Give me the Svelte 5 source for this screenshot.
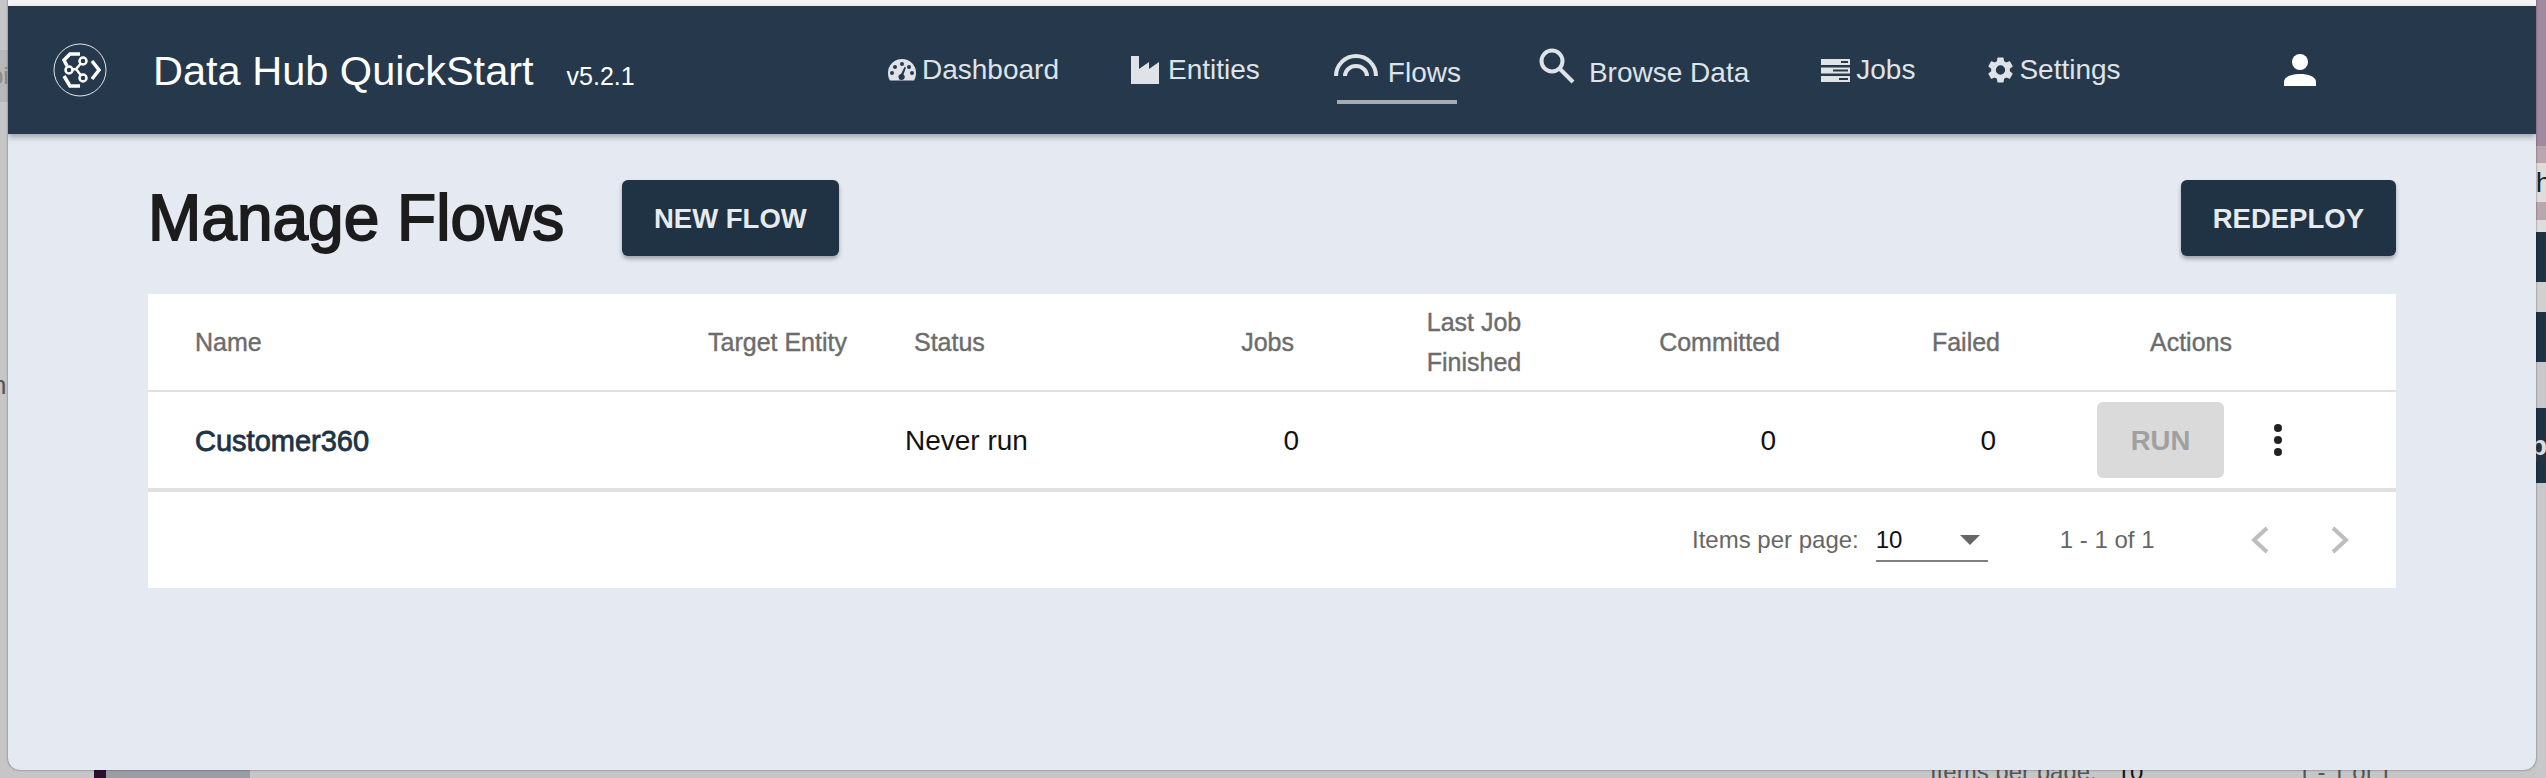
<script lang="ts">
	const navItems = [
		{ id: 'dashboard', label: 'Dashboard', active: false },
		{ id: 'entities', label: 'Entities', active: false },
		{ id: 'flows', label: 'Flows', active: true },
		{ id: 'browse', label: 'Browse Data', active: false },
		{ id: 'jobs', label: 'Jobs', active: false },
		{ id: 'settings', label: 'Settings', active: false }
	];
</script>

<div class="desk">
	<!-- bits of other windows peeking out behind the app window -->
	<div class="left-tab"><span>pi</span></div>
	<div class="left-letter">n</div>
	<div class="side">
		<div class="s-purple"></div>
		<div class="s-mauve"></div>
		<div class="s-text">th</div>
		<div class="s-mauve short"></div>
		<div class="s-light"></div>
		<div class="s-dark"><i></i></div>
		<div class="s-grey"></div>
		<div class="s-dark low">p</div>
	</div>
	<div class="dock">
		<i class="d-plum"></i><i class="d-slate"></i>
	</div>
	<div class="behind">
		<span class="lbl">Items per page:</span><span class="val">10</span><span class="lbl rng">1 - 1 of 1</span>
	</div>

	<main class="window">
		<div class="titlebar"></div>
		<header class="topbar">
			<div class="brand">
				<svg class="logo" viewBox="0 0 54 54" width="54" height="54" fill="none" stroke="#fff">
					<circle cx="27" cy="27" r="26" stroke-width="1" stroke="#dfe3e8" />
					<path d="M27 11H17l-6 6 3 6M11 33l6 10h10" stroke-width="3.500" />
					<path d="M39 18l7 9-7 9" stroke-width="3.500" />
					<path d="M23 26l-7 1M23 26l7-8M23 26l7 9" stroke-width="2.500" />
					<circle cx="30" cy="18" r="3.500" stroke-width="2.500" fill="#26394c" />
					<circle cx="16" cy="27" r="3.500" stroke-width="2.500" fill="#26394c" />
					<circle cx="30" cy="35" r="3.500" stroke-width="2.500" fill="#26394c" />
				</svg>
				<div class="brand-text">
					<span class="app-name">Data Hub QuickStart</span>
					<span class="version">v5.2.1</span>
				</div>
			</div>
			<nav class="nav">
				{#each navItems as item}
					<a class="nav-item {item.id}" class:active={item.active} href="#{item.id}">
						{#if item.id === 'dashboard'}
							<svg viewBox="0 0 28 22" width="28" height="22" fill="#dfe3e8">
								<path fill-rule="evenodd" d="M14 0a14 14 0 0 1 14 14c0 3-.8 5.500-2 7.500H2C.8 19.500 0 17 0 14A14 14 0 0 1 14 0zM14 3a2 2 0 1 0 0 4 2 2 0 0 0 0-4zM7 6a2 2 0 1 0 0 4 2 2 0 0 0 0-4zM21 6a2 2 0 1 0 0 4 2 2 0 0 0 0-4zM4 12a2 2 0 1 0 0 4 2 2 0 0 0 0-4zM24 12a2 2 0 1 0 0 4 2 2 0 0 0 0-4zM16.500 8L13 15a3 3 0 1 0 1 6 3 3 0 0 0 1.500-5.500l2.500-7z" />
							</svg>
						{:else if item.id === 'entities'}
							<svg viewBox="0 0 28 28" width="28" height="28" fill="#dfe3e8">
								<path d="M0 0h8v13l10-7v7l10-7v22H0z" />
							</svg>
						{:else if item.id === 'flows'}
							<svg viewBox="0 0 44 22" width="44" height="22" fill="none" stroke="#dfe3e8" stroke-width="4">
								<path d="M2 22a20 20 0 0 1 40 0" />
								<path d="M11 22a11 10 0 0 1 22 0" />
							</svg>
						{:else if item.id === 'browse'}
							<svg viewBox="0 0 36 36" width="36" height="36" fill="none" stroke="#dfe3e8" stroke-width="4">
								<circle cx="13" cy="13" r="10.500" />
								<path d="M21 21l13 13" />
							</svg>
						{:else if item.id === 'jobs'}
							<svg viewBox="0 0 29 23" width="29" height="23" fill="#dfe3e8">
								<path fill-rule="evenodd" d="M0 0h29v6H0zM20 2v2h7V2zM0 8.500h29v6H0zM12 10.500v2h15v-2zM0 17h29v6H0zM18 19v2h9v-2z" />
							</svg>
						{:else if item.id === 'settings'}
							<svg viewBox="2.500 2 19 20" width="25" height="26" fill="#dfe3e8">
								<path d="M19.140 12.940c.04-.3.060-.61.060-.94s-.02-.64-.07-.94l2.030-1.580a.49.49 0 0 0 .12-.61l-1.920-3.320a.49.49 0 0 0-.59-.22l-2.390.96a7 7 0 0 0-1.620-.94l-.36-2.540a.48.48 0 0 0-.48-.41h-3.840a.48.48 0 0 0-.47.41l-.36 2.540a7.300 7.300 0 0 0-1.620.94l-2.390-.96a.49.49 0 0 0-.59.22L2.740 8.870a.48.48 0 0 0 .12.61l2.030 1.580c-.05.3-.09.63-.09.94s.02.64.07.94l-2.030 1.580a.49.49 0 0 0-.12.61l1.920 3.320c.12.22.37.29.59.22l2.390-.96c.5.380 1.030.7 1.620.94l.36 2.540c.05.240.24.410.480.410h3.840c.24 0 .44-.17.47-.41l.36-2.540a7 7 0 0 0 1.620-.94l2.390.96c.22.080.47 0 .59-.22l1.920-3.320a.48.48 0 0 0-.12-.61zM12 15.600a3.600 3.600 0 1 1 0-7.200 3.600 3.600 0 0 1 0 7.200z" />
							</svg>
						{/if}
						<span>{item.label}</span>
					</a>
				{/each}
			</nav>
			<svg class="user" viewBox="0 0 32 32" width="32" height="32" fill="#fff">
				<circle cx="16" cy="8" r="8" />
				<path d="M0 32v-4c0-5.500 8-8 16-8s16 2.500 16 8v4z" />
			</svg>
		</header>

		<div class="page">
			<div class="title-row">
				<h1>Manage Flows</h1>
				<button class="btn">NEW FLOW</button>
				<button class="btn redeploy">REDEPLOY</button>
			</div>

			<section class="card">
				<div class="grid head">
					<span class="c-name">Name</span>
					<span class="c-target">Target Entity</span>
					<span class="c-status">Status</span>
					<span class="c-jobs">Jobs</span>
					<span class="c-last">Last Job<br />Finished</span>
					<span class="c-comm">Committed</span>
					<span class="c-fail">Failed</span>
					<span class="c-act">Actions</span>
				</div>
				<div class="grid row">
					<a class="c-name flow-link" href="#customer360">Customer360</a>
					<span class="c-target"></span>
					<span class="c-status never">Never run</span>
					<span class="c-jobs">0</span>
					<span class="c-last"></span>
					<span class="c-comm">0</span>
					<span class="c-fail">0</span>
					<span class="c-act actions">
						<button class="run" disabled>RUN</button>
						<span class="dots" aria-label="More"><i></i><i></i><i></i></span>
					</span>
				</div>
				<div class="paginator">
					<span class="pg-label">Items per page:</span>
					<span class="pg-select">10<i class="caret"></i></span>
					<span class="pg-range">1 - 1 of 1</span>
					<svg class="chev" viewBox="0 0 20 28" width="20" height="28" fill="none" stroke="#bdbdbd" stroke-width="4">
						<path d="M17 2L4 14l13 12" />
					</svg>
					<svg class="chev next" viewBox="0 0 20 28" width="20" height="28" fill="none" stroke="#bdbdbd" stroke-width="4">
						<path d="M3 2l13 12L3 26" />
					</svg>
				</div>
			</section>
		</div>
	</main>
</div>

<style>
	:global(body) {
		margin: 0;
		font-family: 'Liberation Sans', Arial, sans-serif;
	}
	.desk {
		position: relative;
		width: 2546px;
		height: 778px;
		overflow: hidden;
		background: #c6c6c6;
	}
	.left-tab {
		position: absolute;
		left: 0;
		top: 50px;
		width: 8px;
		height: 52px;
		overflow: hidden;
		background: #b8b8b8;
		color: #8a8a8a;
		font-size: 24px;
		line-height: 52px;
	}
	.left-tab span {
		margin-left: -10px;
	}
	.left-letter {
		position: absolute;
		left: -8px;
		top: 370px;
		font-size: 26px;
		color: #555;
	}
	.side {
		position: absolute;
		left: 2536px;
		top: 0;
		width: 10px;
		height: 778px;
		overflow: hidden;
		display: flex;
		flex-direction: column;
		background: #c8c8cc;
	}
	.s-purple {
		height: 146px;
		background: #a08a9f;
	}
	.s-mauve {
		height: 17px;
		background: #b9a6ae;
	}
	.s-mauve.short {
		height: 18px;
	}
	.s-text {
		height: 39px;
		background: #e0dcdc;
		color: #222;
		font-size: 28px;
		line-height: 39px;
		white-space: nowrap;
		text-indent: -8px;
	}
	.s-light {
		height: 12px;
		background: #ddd;
	}
	.s-dark {
		position: relative;
		height: 130px;
		background: #203344;
	}
	.s-dark i {
		position: absolute;
		left: 0;
		top: 50px;
		width: 10px;
		height: 30px;
		background: #d0d0d0;
	}
	.s-dark.low {
		height: 75px;
		color: #ddd;
		font-size: 28px;
		font-weight: 700;
		line-height: 75px;
		text-indent: -6px;
	}
	.s-grey {
		height: 46px;
		background: #c8c8cc;
	}
	.dock {
		position: absolute;
		left: 94px;
		top: 770px;
		display: flex;
	}
	.dock i {
		display: block;
		height: 8px;
	}
	.d-plum {
		width: 12px;
		background: #2a0f2e;
	}
	.d-slate {
		width: 144px;
		background: #9a9ea3;
	}
	.behind {
		position: absolute;
		left: 1930px;
		top: 758px;
		font-size: 24px;
		color: #555;
		white-space: nowrap;
	}
	.behind .val {
		margin-left: 20px;
		color: #111;
	}
	.behind .rng {
		margin-left: 154px;
	}
	.window {
		position: absolute;
		left: 8px;
		top: 0;
		width: 2528px;
		height: 770px;
		background: #e5e9f1;
		border-radius: 0 0 12px 12px;
		box-shadow: 0 0 2px rgba(0, 0, 0, 0.6);
		overflow: hidden;
	}
	.titlebar {
		height: 6px;
		background: #f4f4f4;
	}
	.topbar {
		display: flex;
		align-items: center;
		height: 128px;
		background: #26394c;
		box-shadow: 0 3px 6px rgba(0, 0, 0, 0.3);
		position: relative;
		color: #fff;
	}
	.brand {
		display: flex;
		align-items: center;
		padding-left: 45px;
		width: 880px;
		box-sizing: border-box;
	}
	.brand-text {
		display: flex;
		align-items: baseline;
		margin-left: 46px;
		padding-top: 2px;
	}
	.app-name {
		font-size: 41.500px;
	}
	.version {
		font-size: 25px;
		margin-left: 33px;
	}
	.nav {
		display: flex;
		align-items: center;
		height: 100%;
	}
	.nav-item {
		position: relative;
		display: flex;
		align-items: center;
		gap: 6px;
		color: #dfe3e8;
		font-size: 28px;
		text-decoration: none;
		height: 100%;
	}
	.entities {
		margin-left: 72px;
		gap: 9px;
	}
	.flows {
		margin-left: 74px;
		gap: 10px;
	}
	.flows svg {
		margin-top: -10px;
	}
	.browse {
		margin-left: 78px;
		gap: 14px;
	}
	.browse svg {
		margin-top: -9px;
	}
	.jobs {
		margin-left: 72px;
	}
	.settings {
		margin-left: 73px;
	}
	.active::after {
		content: '';
		position: absolute;
		left: 3px;
		right: 4px;
		bottom: 30px;
		height: 4px;
		background: #a4abb3;
	}
	.flows span,
	.browse span {
		padding-top: 6px;
	}
	.user {
		margin-left: 163px;
	}
	.page {
		padding: 0 140px;
	}
	.title-row {
		display: flex;
		align-items: center;
		box-sizing: border-box;
		height: 160px;
		padding-top: 8px;
	}
	h1 {
		margin: 0;
		font-size: 64px;
		font-weight: 400;
		-webkit-text-stroke: 1.800px #1c1c1c;
		color: #1c1c1c;
		width: 474px;
		flex: none;
	}
	.btn {
		height: 76px;
		padding: 2px 32px 0;
		border: 0;
		border-radius: 6px;
		background: #203344;
		color: #e8ebee;
		font: 700 27.500px 'Liberation Sans', Arial, sans-serif;
		box-shadow: 0 3px 4px rgba(0, 0, 0, 0.3);
	}
	.redeploy {
		margin-left: auto;
	}
	.card {
		background: #fff;
	}
	.grid {
		display: grid;
		grid-template-columns: 560px 206px 196px 184px 360px 126px 220px 1fr;
		align-items: center;
		border-bottom: 2px solid #e0e0e0;
	}
	.head {
		height: 96px;
		font-size: 25px;
		color: #6c6c6c;
		-webkit-text-stroke: 0.4px #6c6c6c;
		line-height: 40px;
	}
	.row {
		height: 96px;
		border-bottom-width: 4px;
		font-size: 28px;
		color: #111;
	}
	.row > span,
	.row > a {
		padding-top: 2px;
	}
	.c-name {
		padding-left: 47px;
	}
	.flow-link {
		color: #203344;
		font-size: 29px;
		-webkit-text-stroke: 0.8px #203344;
		text-decoration: none;
	}
	.c-last {
		text-align: center;
	}
	.never {
		margin-left: -9px;
		white-space: nowrap;
	}
	.c-jobs,
	.c-comm,
	.c-fail {
		text-align: right;
	}
	.row .c-jobs {
		margin-right: -5px;
	}
	.row .c-comm,
	.row .c-fail {
		margin-right: 4px;
	}
	.head .c-act {
		padding-left: 150px;
	}
	.row > .actions {
		display: flex;
		align-items: center;
		padding: 0 0 0 97px;
	}
	.run {
		width: 127px;
		height: 76px;
		padding-top: 3px;
		border: 0;
		border-radius: 6px;
		background: #dadada;
		color: #a0a0a0;
		font: 700 27.500px 'Liberation Sans', Arial, sans-serif;
	}
	.dots {
		display: flex;
		flex-direction: column;
		gap: 4px;
		margin-left: 50px;
	}
	.dots i {
		width: 8px;
		height: 8px;
		border-radius: 50%;
		background: #222;
	}
	.paginator {
		display: flex;
		align-items: center;
		height: 96px;
		font-size: 24px;
		color: #666;
	}
	.pg-label {
		margin-left: 1544px;
	}
	.pg-select {
		position: relative;
		width: 112px;
		margin-left: 17px;
		margin-top: 4px;
		padding-top: 3px;
		color: #111;
		border-bottom: 2px solid #808080;
		padding-bottom: 6px;
	}
	.caret {
		position: absolute;
		right: 8px;
		top: 12px;
		border: 10px solid transparent;
		border-bottom: 0;
		border-top: 10px solid #666;
	}
	.pg-range {
		margin-left: 72px;
	}
	.chev {
		margin-left: 95px;
	}
	.chev.next {
		margin-left: 60px;
	}
</style>
